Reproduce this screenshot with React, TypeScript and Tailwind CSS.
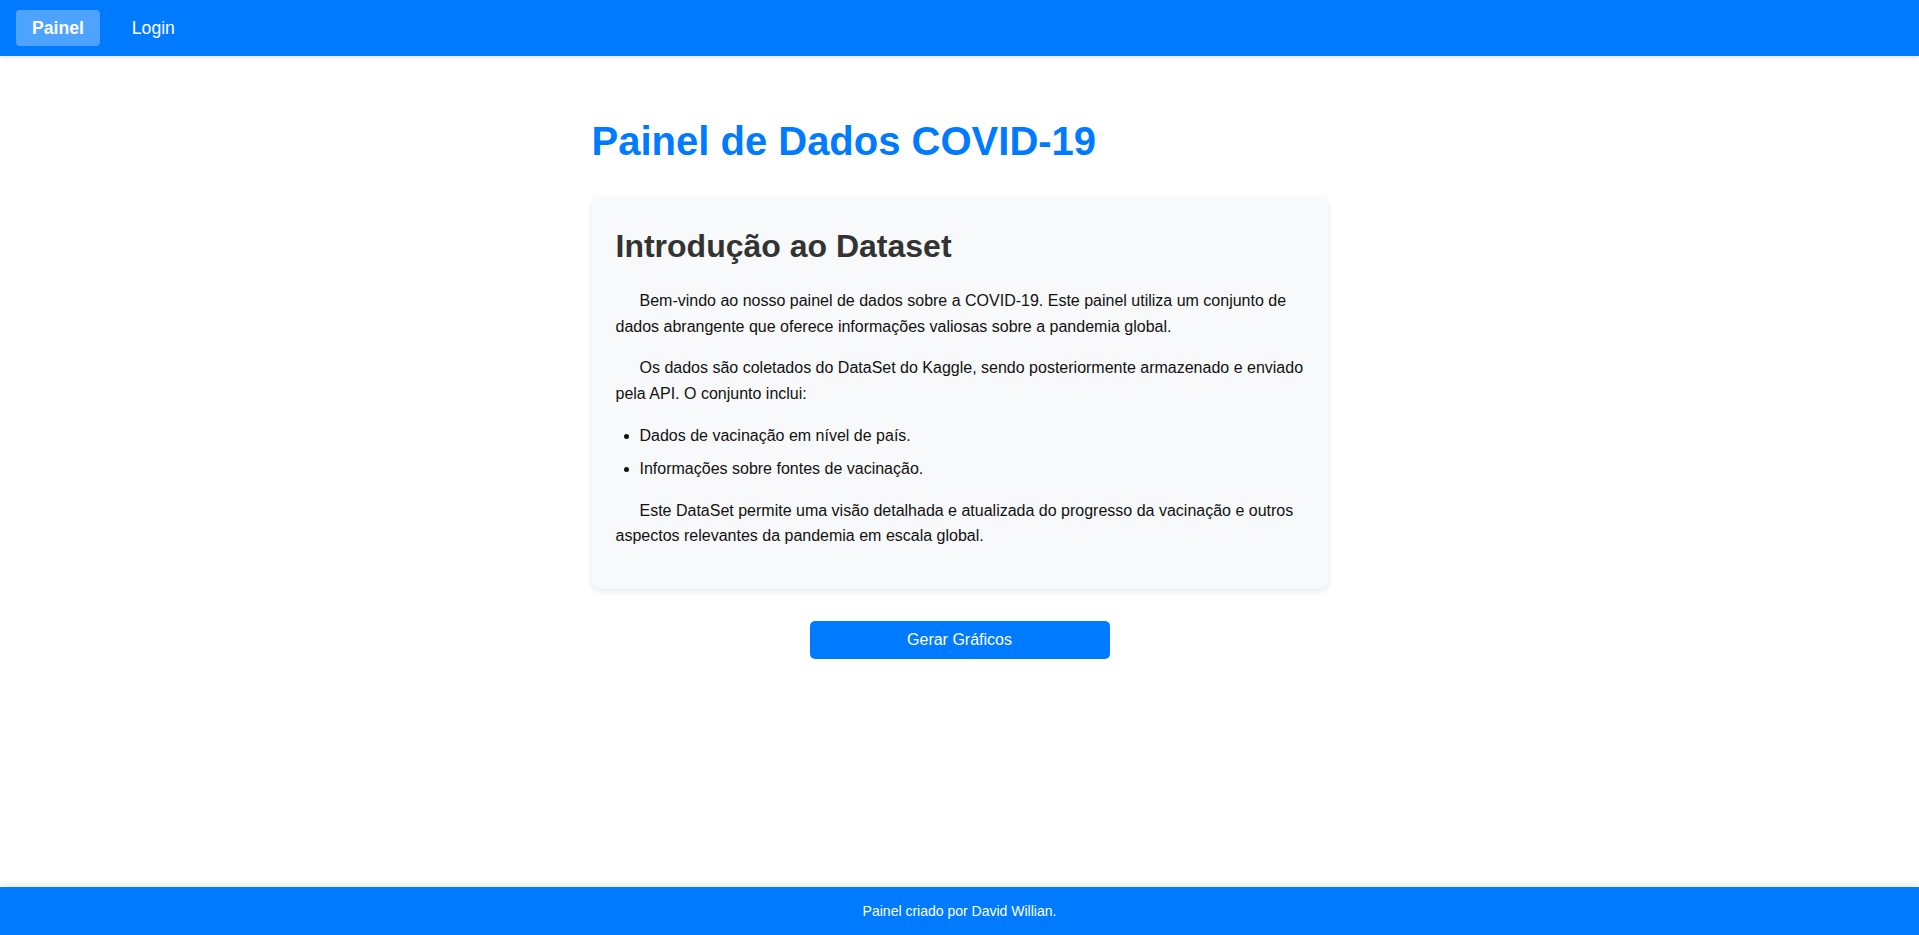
export default function App() {
  const items = [
    "Dados de vacinação em nível de país.",
    "Informações sobre fontes de vacinação.",
  ];

  return (
    <div className="min-h-screen flex flex-col bg-white font-['Liberation_Sans',Arial,sans-serif]">
      <nav className="relative z-10 h-14 bg-[#007bff] flex items-center px-4 gap-4 shadow-[0_2px_4px_rgba(0,0,0,0.1)]">
        <a className="h-9 px-4 flex items-center rounded bg-white/30 text-white font-bold text-[17.6px]">
          Painel
        </a>
        <a className="h-9 px-4 flex items-center text-white text-[17.6px]">
          Login
        </a>
      </nav>

      <main className="flex-1">
        <div className="max-w-[800px] mx-auto px-8 pt-[53px]">
          <h1 className="text-[40px] leading-[1.6] font-bold text-[#007bff] mb-6">
            Painel de Dados COVID-19
          </h1>

          <section className="bg-[#f8f9fa] rounded-lg p-6 shadow-[0_2px_6px_rgba(0,0,0,0.1)] text-base leading-[1.6] text-[#111]">
            <h2 className="text-[32px] leading-[1.6] font-bold text-[#333] mb-4">
              Introdução ao Dataset
            </h2>
            <p className="indent-6 mb-4">
              Bem-vindo ao nosso painel de dados sobre a COVID-19. Este painel
              utiliza um conjunto de dados abrangente que oferece informações
              valiosas sobre a pandemia global.
            </p>
            <p className="indent-6 mb-4">
              Os dados são coletados do DataSet do Kaggle, sendo posteriormente
              armazenado e enviado pela API. O conjunto inclui:
            </p>
            <ul className="list-disc pl-6 mb-4">
              {items.map((item) => (
                <li key={item} className="mb-2">
                  {item}
                </li>
              ))}
            </ul>
            <p className="indent-6 mb-4">
              Este DataSet permite uma visão detalhada e atualizada do progresso
              da vacinação e outros aspectos relevantes da pandemia em escala
              global.
            </p>
          </section>

          <button className="block mx-auto mt-8 w-[300px] h-[38px] rounded-[5px] bg-[#007bff] text-white text-base">
            Gerar Gráficos
          </button>
        </div>
      </main>

      <footer className="h-12 bg-[#007bff] text-white text-sm flex items-center justify-center shadow-[0_-2px_6px_rgba(0,0,0,0.1)]">
        Painel criado por David Willian.
      </footer>
    </div>
  );
}
